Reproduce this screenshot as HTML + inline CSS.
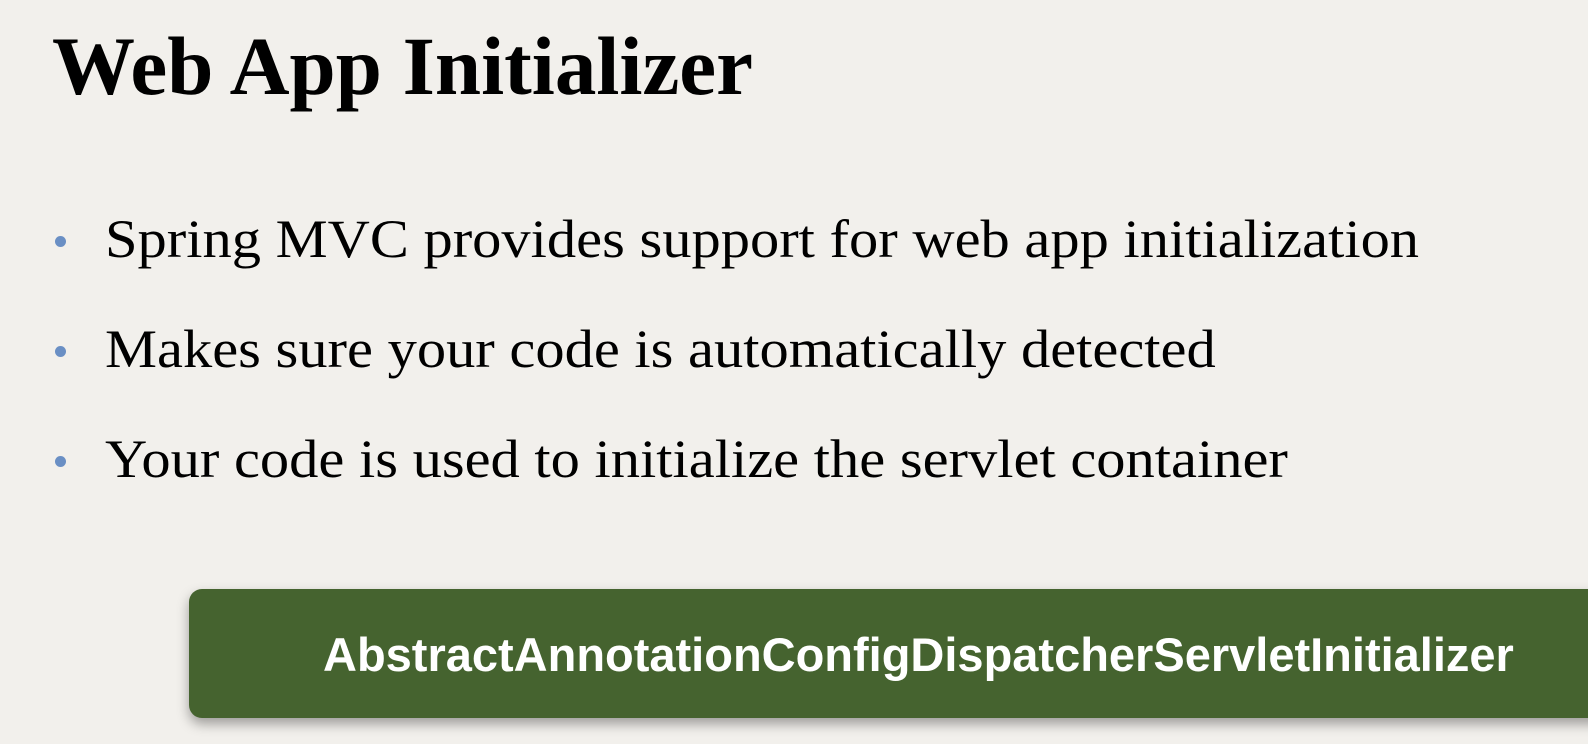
<!DOCTYPE html>
<html><head><meta charset="utf-8"><style>
html,body{margin:0;padding:0}
body{width:1588px;height:744px;background:#f2f0ec;position:relative;overflow:hidden;font-family:"Liberation Serif",serif;color:#000}
.t{position:absolute;left:52px;top:18px;font-size:83px;font-weight:bold;white-space:nowrap}
.b{position:absolute;left:105px;font-size:54px;white-space:nowrap;transform:scaleX(1.083);transform-origin:0 0}
.d{position:absolute;left:55px;width:11px;height:11px;border-radius:50%;background:#6a8fc4}
.box{position:absolute;left:189px;top:589px;width:1440px;height:129px;background:#45632f;border-radius:13px;box-shadow:0 6px 12px rgba(0,0,0,.35)}
.bt{position:absolute;left:323px;top:627px;font-family:"Liberation Sans",Arial,sans-serif;font-weight:bold;font-size:47px;color:#fff;white-space:nowrap}
</style></head><body>
<div class="t">Web App Initializer</div>
<div class="d" style="top:236px"></div><div class="b" style="top:208px">Spring MVC provides support for web app initialization</div>
<div class="d" style="top:346px"></div><div class="b" style="top:318px">Makes sure your code is automatically detected</div>
<div class="d" style="top:456px"></div><div class="b" style="top:428px">Your code is used to initialize the servlet container</div>
<div class="box"></div>
<div class="bt">AbstractAnnotationConfigDispatcherServletInitializer</div>
</body></html>
